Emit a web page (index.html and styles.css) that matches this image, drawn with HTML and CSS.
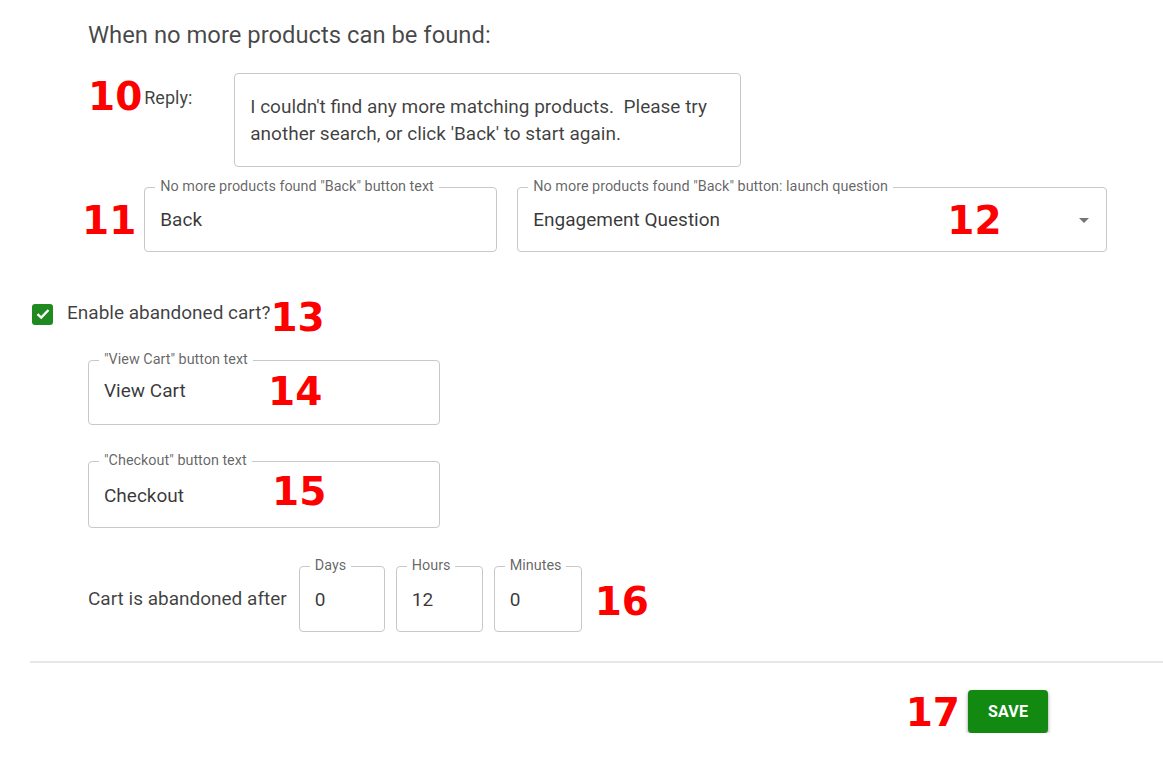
FILE: index.html
```html
<!DOCTYPE html>
<html>
<head>
<meta charset="utf-8">
<link rel="stylesheet" href="styles.css">
</head>
<body>
<div class="page">
  <div class="section">
    <h2 class="heading">When no more products can be found:</h2>

    <div class="reply-row">
      <span class="num num-10">10</span>
      <span class="reply-label">Reply:</span>
      <div class="textarea">I couldn't find any more matching products.&nbsp; Please try another search, or click 'Back' to start again.</div>
    </div>

    <div class="back-row">
      <span class="num num-11">11</span>
      <fieldset class="field field-back">
        <legend>No more products found "Back" button text</legend>
        <div class="value">Back</div>
      </fieldset>
      <fieldset class="field field-select">
        <legend>No more products found "Back" button: launch question</legend>
        <div class="value select-value">
          <span>Engagement Question</span>
          <span class="num num-12">12</span>
          <svg class="caret" width="10" height="5" viewBox="0 0 10 5"><path d="M0 0 L10 0 L5 5 Z" fill="#757575"/></svg>
        </div>
      </fieldset>
    </div>
  </div>

  <div class="check-row">
    <span class="checkbox">
      <svg width="14" height="12" viewBox="0 0 14 12"><path d="M1.5 6.2 L5.2 9.6 L12.5 2" fill="none" stroke="#fff" stroke-width="2.4"/></svg>
    </span>
    <span class="check-label">Enable abandoned cart?</span>
    <span class="num num-13">13</span>
  </div>

  <div class="section cart-section">
    <fieldset class="field field-cart">
      <legend>"View Cart" button text</legend>
      <div class="value value-cart">View Cart<span class="num num-14">14</span></div>
    </fieldset>

    <fieldset class="field field-cart field-checkout">
      <legend>"Checkout" button text</legend>
      <div class="value value-checkout">Checkout<span class="num num-15">15</span></div>
    </fieldset>

    <div class="time-row">
      <span class="time-label">Cart is abandoned after</span>
      <fieldset class="field field-time field-days">
        <legend>Days</legend>
        <div class="value value-time">0</div>
      </fieldset>
      <fieldset class="field field-time field-hours">
        <legend>Hours</legend>
        <div class="value value-time">12</div>
      </fieldset>
      <fieldset class="field field-time field-minutes">
        <legend>Minutes</legend>
        <div class="value value-time">0</div>
      </fieldset>
      <span class="num num-16">16</span>
    </div>
  </div>

  <div class="divider"></div>

  <div class="actions">
    <span class="num num-17">17</span>
    <button class="save">SAVE</button>
  </div>
</div>
</body>
</html>
```

FILE: styles.css
```css
html, body {
  margin: 0;
  padding: 0;
  background: #ffffff;
}

body {
  font-family: Roboto, "Liberation Sans", sans-serif;
  color: rgba(0, 0, 0, 0.8);
  overflow: hidden;
}

.page {
  padding-left: 30px;
  padding-top: 21px;
}

.section {
  padding-left: 58px;
}

.heading {
  margin: 0;
  font-size: 23.8px;
  line-height: 28px;
  font-weight: 400;
  color: rgba(0, 0, 0, 0.72);
}

.num {
  font-family: "DejaVu Sans", sans-serif;
  font-weight: 700;
  font-size: 39px;
  line-height: 40px;
  color: #ff0000;
}

.reply-row {
  display: flex;
  align-items: flex-start;
  margin-top: 24px;
}

.num-10 {
  margin-top: 4px;
}

.reply-label {
  width: 90px;
  margin-left: 2px;
  font-size: 18px;
  line-height: 20px;
  margin-top: 15px;
  color: rgba(0, 0, 0, 0.75);
}

.textarea {
  box-sizing: border-box;
  width: 507px;
  height: 94px;
  padding: 19px 14px 0 15px;
  border: 1px solid #c8c8c8;
  border-radius: 4px;
  font-size: 19px;
  line-height: 27px;
  color: rgba(0, 0, 0, 0.75);
}

.back-row {
  display: flex;
  align-items: flex-start;
  margin-top: 12px;
  margin-left: -6px;
}

.num-11 {
  margin-top: 22px;
  margin-right: 8px;
}

.field {
  margin: 0;
  padding: 0 15px;
  border: 1px solid #c8c8c8;
  border-radius: 4px;
  min-width: 0;
}

.field legend {
  margin-left: -5px;
  padding: 0 5px;
  font-size: 14.4px;
  line-height: 16px;
  color: rgba(0, 0, 0, 0.62);
  white-space: nowrap;
}

.value {
  font-size: 19px;
  line-height: 20px;
  color: rgba(0, 0, 0, 0.78);
}

.field-back {
  width: 321px;
}

.field-back .value,
.field-select .value {
  padding: 15px 0 21px;
}

.field-select {
  width: 558px;
  margin-left: 20px;
}

.select-value {
  display: flex;
  align-items: center;
  position: relative;
}

.num-12 {
  position: absolute;
  left: 414px;
  top: 6px;
}

.caret {
  margin-left: auto;
  margin-right: 2px;
}

.check-row {
  display: flex;
  align-items: center;
  margin-top: 42px;
  height: 40px;
}

.checkbox {
  width: 21px;
  height: 21px;
  margin-left: 2px;
  margin-top: 0;
  border-radius: 3px;
  background: #1f8a1f;
  display: flex;
  align-items: center;
  justify-content: center;
}

.check-label {
  margin-left: 14px;
  font-size: 19px;
  line-height: 22px;
  margin-top: -2px;
  color: rgba(0, 0, 0, 0.75);
}

.num-13 {
  margin-top: 7px;
}

.cart-section {
  margin-top: 18px;
}

.field-cart {
  width: 320px;
}

.value-cart {
  position: relative;
  padding: 13px 0 23px;
}

.field-checkout {
  margin-top: 28px;
}

.value-checkout {
  position: relative;
  padding: 17px 0 21px;
}

.num-14 {
  position: absolute;
  left: 164px;
  top: 4px;
}

.num-15 {
  position: absolute;
  left: 168px;
  top: 3px;
}

.time-row {
  display: flex;
  align-items: flex-start;
  margin-top: 30px;
}

.time-label {
  font-size: 19px;
  line-height: 20px;
  margin-top: 31px;
  margin-right: 12px;
  color: rgba(0, 0, 0, 0.75);
}

.field-time {
  padding: 0 15px;
  margin-right: 11px;
}

.field-days {
  width: 54px;
}

.field-hours {
  width: 55px;
}

.field-minutes {
  width: 56px;
}

.value-time {
  padding: 16px 0 21px;
}

.num-16 {
  margin-top: 24px;
  margin-left: 2px;
}

.divider {
  height: 2px;
  background: #e6e6e6;
  margin-top: 29px;
}

.actions {
  display: flex;
  justify-content: flex-end;
  align-items: center;
  padding-right: 115px;
  margin-top: 26px;
}

.num-17 {
  margin-right: 8px;
  margin-top: 4px;
}

.save {
  width: 80px;
  height: 43px;
  border: none;
  border-radius: 4px;
  background: #128a12;
  color: #ffffff;
  font-family: Roboto, "Liberation Sans", sans-serif;
  font-weight: 700;
  font-size: 16px;
  letter-spacing: 0.2px;
  box-shadow: 0 2px 4px rgba(0, 0, 0, 0.3), 0 1px 2px rgba(0, 0, 0, 0.2);
  padding: 0;
}
```
